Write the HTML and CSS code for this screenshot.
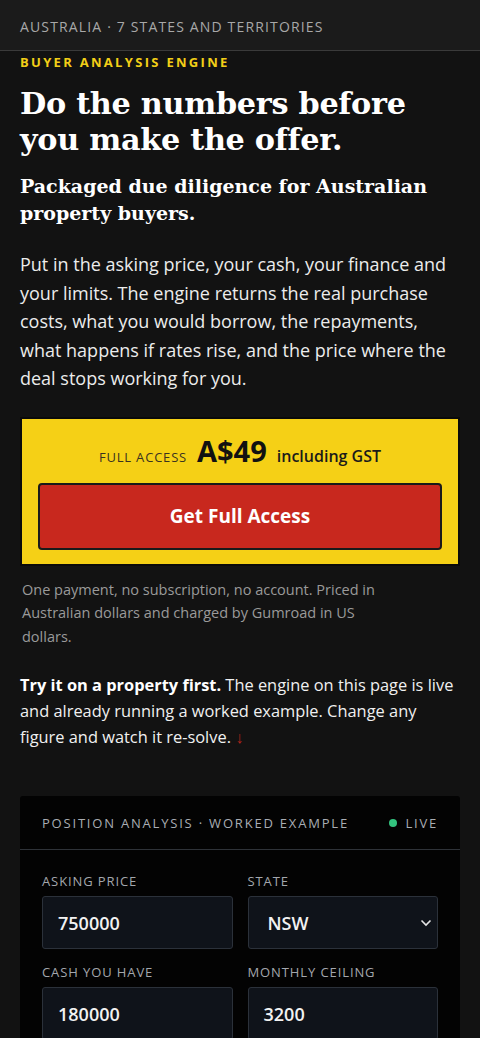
FILE: index.html
```html
<!DOCTYPE html>
<html lang="en">
<head>
<meta charset="utf-8">
<title>Buyer Analysis Engine</title>
<link rel="stylesheet" href="styles.css">
</head>
<body>
<header class="topbar">AUSTRALIA · 7 STATES AND TERRITORIES</header>
<main class="page">
  <p class="eyebrow">BUYER ANALYSIS ENGINE</p>
  <h1 class="title">Do the numbers before you make the offer.</h1>
  <h2 class="subtitle">Packaged due diligence for Australian property buyers.</h2>
  <p class="lead">Put in the asking price, your cash, your finance and your limits. The engine returns the real purchase costs, what you would borrow, the repayments, what happens if rates rise, and the price where the deal stops working for you.</p>
  <section class="offer">
    <div class="price-row">
      <span class="price-label">FULL ACCESS</span>
      <span class="price">A$49</span>
      <span class="price-note">including GST</span>
    </div>
    <a class="cta" href="#">Get Full Access</a>
  </section>
  <p class="fine">One payment, no subscription, no account. Priced in Australian dollars and charged by Gumroad in US dollars.</p>
  <p class="try"><strong>Try it on a property first.</strong> The engine on this page is live and already running a worked example. Change any figure and watch it re-solve. <span class="arrow">↓</span></p>
  <section class="panel">
    <div class="panel-head">
      <span class="panel-title">POSITION ANALYSIS · WORKED EXAMPLE</span>
      <span class="live"><span class="dot"></span>LIVE</span>
    </div>
    <div class="fields">
      <label class="field"><span class="field-label">ASKING PRICE</span><span class="input">750000</span></label>
      <label class="field"><span class="field-label">STATE</span><span class="input select">NSW<svg class="chev" width="12" height="8" viewBox="0 0 12 8"><path d="M1.5 1.5 L6 6 L10.5 1.5" fill="none" stroke="#e6e6e6" stroke-width="1.6"/></svg></span></label>
      <label class="field"><span class="field-label">CASH YOU HAVE</span><span class="input">180000</span></label>
      <label class="field"><span class="field-label">MONTHLY CEILING</span><span class="input">3200</span></label>
    </div>
  </section>
</main>
</body>
</html>
```
FILE: styles.css
```css
html, body { margin: 0; padding: 0; }
body {
  background: #121212;
  color: #eeeeee;
  font-family: "Open Sans", "Noto Sans", sans-serif;
  width: 480px;
  overflow: hidden;
}
.topbar {
  background: #1b1b1b;
  border-bottom: 1px solid #3a3a3a;
  height: 51px;
  box-sizing: border-box;
  display: flex;
  align-items: center;
  padding: 2px 20px 0;
  font-size: 14px;
  letter-spacing: 1.15px;
  color: #a8a8a8;
}
.page { padding: 0 20px; }
.eyebrow {
  margin: 3px 0 0;
  font-size: 13px;
  font-weight: 700;
  letter-spacing: 2.3px;
  color: #f2cf17;
  line-height: 16px;
}
.title {
  margin: 16px 0 0;
  font-family: "DejaVu Serif", Georgia, serif;
  font-weight: 700;
  font-size: 30.3px;
  line-height: 36px;
  color: #ffffff;
  letter-spacing: -0.3px;
}
.subtitle {
  margin: 15px 0 0;
  font-family: "DejaVu Serif", Georgia, serif;
  font-weight: 700;
  font-size: 19px;
  line-height: 27px;
  color: #ffffff;
}
.lead {
  margin: 23px 0 0;
  font-size: 18px;
  line-height: 28.6px;
  color: #ececec;
}
.offer {
  margin-top: 24px;
  background: #f5d016;
  border: 2px solid #0a0a0a;
  padding: 13px 16px 14px;
  display: flex;
  flex-direction: column;
  align-items: stretch;
  gap: 13px;
}
.price-row {
  display: flex;
  align-items: baseline;
  justify-content: center;
  gap: 10px;
  color: #1a1a1a;
}
.price-label { font-size: 13px; letter-spacing: 0.8px; color: #3a3320; }
.price { font-size: 29px; font-weight: 700; line-height: 38px; color: #111; }
.price-note { font-size: 16px; font-weight: 600; color: #1a1a1a; }
.cta {
  display: flex;
  align-items: center;
  justify-content: center;
  height: 67px;
  box-sizing: border-box;
  background: #c8281e;
  border: 2px solid #1a1a1a;
  border-radius: 4px;
  color: #fff;
  font-size: 19px;
  font-weight: 700;
  text-decoration: none;
}
.fine {
  margin: 12px 2px 0;
  max-width: 385px;
  font-size: 14.5px;
  line-height: 23.5px;
  color: #9a9a9a;
}
.try {
  margin: 24px 0 0;
  font-size: 16.4px;
  line-height: 26px;
  color: #f0f0f0;
}
.try strong { color: #fff; }
.arrow { color: #b8241b; }
.panel {
  margin-top: 46px;
  background: #030303;
  border-radius: 3px;
}
.panel-head {
  display: flex;
  justify-content: space-between;
  align-items: center;
  height: 53px;
  padding: 0 22px;
  border-bottom: 1px solid #2e3238;
  font-size: 13px;
  letter-spacing: 1.8px;
  color: #a9adb3;
}
.live { display: flex; align-items: center; gap: 8px; }
.dot { width: 8px; height: 8px; border-radius: 50%; background: #33c47f; }
.fields {
  display: grid;
  grid-template-columns: 1fr 1fr;
  column-gap: 15px;
  row-gap: 14px;
  padding: 22px 22px 20px;
}
.field { display: flex; flex-direction: column; gap: 6px; }
.field-label {
  font-size: 13px;
  letter-spacing: 0.9px;
  color: #a3a7ad;
}
.input {
  height: 53px;
  box-sizing: border-box;
  background: #0f131a;
  border: 1px solid #2b313a;
  border-radius: 3px;
  display: flex;
  align-items: center;
  padding: 0 15px;
  font-size: 18px;
  font-weight: 600;
  color: #f2f2f2;
}
.select { justify-content: space-between; padding: 0 5px 0 19px; }
.chev { display: block; }
```
